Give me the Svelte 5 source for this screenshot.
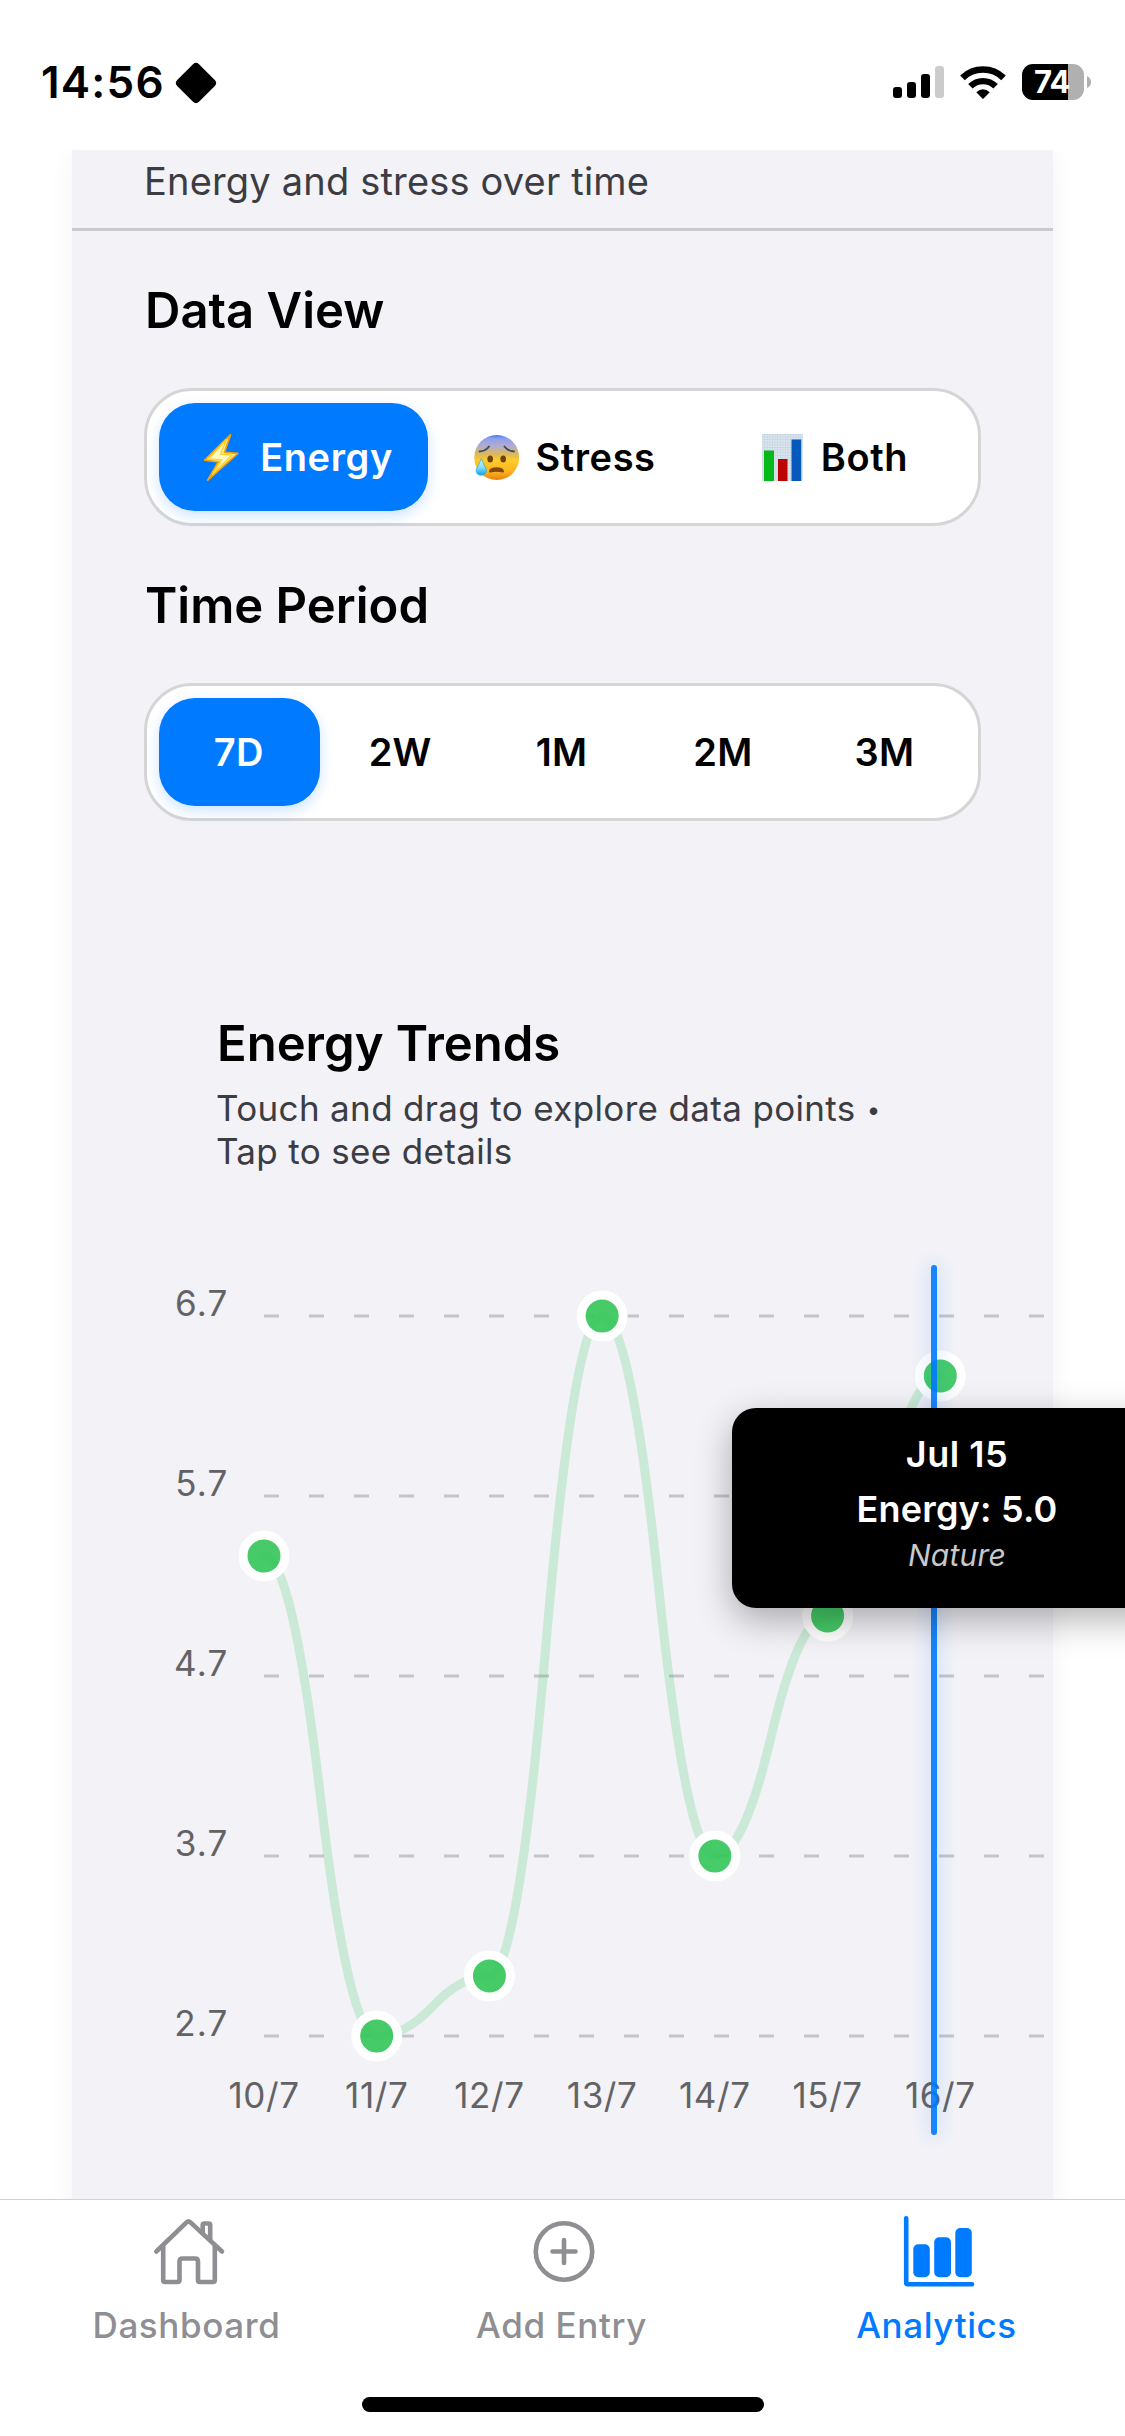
<script>
  const views = [
    { id: 'energy', label: 'Energy' },
    { id: 'stress', label: 'Stress' },
    { id: 'both', label: 'Both' }
  ];
  const periods = ['7D', '2W', '1M', '2M', '3M'];

  let view = $state('energy');
  let period = $state('7D');

  // Chart geometry, local to the plot's own canvas
  const LEFT = 120;
  const TOP = 51;
  const STEP = 112.72;
  const UNIT = 180;
  const MAX = 6.7;

  const ticks = [6.7, 5.7, 4.7, 3.7, 2.7];
  const entries = [
    { day: '10/7', value: 5.3667 },
    { day: '11/7', value: 2.7 },
    { day: '12/7', value: 3.0333 },
    { day: '13/7', value: 6.7 },
    { day: '14/7', value: 3.7 },
    { day: '15/7', value: 5.0333 },
    { day: '16/7', value: 6.3667 }
  ];

  const yOf = (v) => TOP + (MAX - v) * UNIT;
  const points = entries.map((e, i) => ({ ...e, x: LEFT + i * STEP, y: yOf(e.value) }));

  // Each pair of points is joined by two quadratic halves meeting at the midpoint
  const line = points
    .map((p, i) => {
      if (i === 0) return `M${p.x} ${p.y}`;
      const q = points[i - 1];
      const mx = (q.x + p.x) / 2;
      const my = (q.y + p.y) / 2;
      return `Q${(q.x + mx) / 2} ${q.y} ${mx} ${my}Q${(mx + p.x) / 2} ${p.y} ${p.x} ${p.y}`;
    })
    .join(' ');
</script>

<div class="screen">
  <header class="status">
    <div class="clock">
      <span class="time">14:56</span>
      <svg class="diamond" width="42" height="42" viewBox="0 0 42 42">
        <path d="M18 2.2Q21-.6 24 2.2L39.8 18Q42.600 21 39.800 24L24 39.800Q21 42.600 18 39.800L2.200 24Q-.6 21 2.200 18Z" />
      </svg>
    </div>
    <div class="indicators">
      <svg width="51" height="32" viewBox="0 0 51 32">
        <rect x="0" y="21" width="9" height="11" rx="3" />
        <rect x="14" y="16" width="9" height="16" rx="3" />
        <rect x="28" y="8" width="9" height="24" rx="3" />
        <rect x="42" y="0" width="9" height="32" rx="3" fill="#cbcbcb" />
      </svg>
      <svg class="wifi" width="46" height="33" viewBox="0 0 46 33">
        <path d="M2.500 11.800A29.500 29.500 0 0 1 43.500 11.800" fill="none" stroke="#000" stroke-width="6.600" />
        <path d="M10.400 20.300A18 18 0 0 1 35.600 20.300" fill="none" stroke="#000" stroke-width="6.400" />
        <path d="M16.300 26.200Q23 20.200 29.700 26.200L23.600 32.500Q23 33 22.400 32.500Z" />
      </svg>
      <div class="battery"><span>74</span></div>
      <svg class="nub" width="4" height="12" viewBox="0 0 4 12"><path d="M0 0Q4 2 4 6T0 12Z" fill="#b0b0b0" /></svg>
    </div>
  </header>

  <main>
    <section class="card">
      <p class="lead">Energy and stress over time</p>

      <div class="controls">
        <h2>Data View</h2>
        <div class="segments views">
          {#each views as v}
            <button class:active={view === v.id} onclick={() => (view = v.id)}>
              {#if v.id === 'energy'}
                <svg width="47" height="47" viewBox="0 0 47 47">
                  <path d="M32.500.8L6.600 26.200L20.500 27.800L9.700 46.200L39.800 19.400L26.400 18.400Z" fill="#fff3ae" stroke="#f5a10b" stroke-width="1.800" stroke-linejoin="round" />
                  <path d="M28.500 5.500L10.500 25L23.500 26L15 39.500L34 21L22.500 20Z" fill="#fff9c9" stroke="#ffd52e" stroke-width="1.500" />
                </svg>
              {:else if v.id === 'stress'}
                <svg width="47" height="47" viewBox="0 0 47 47">
                  <defs>
                    <linearGradient id="skin" x1="0" y1="0" x2="0" y2="1">
                      <stop offset="0" stop-color="#3f7bf5" />
                      <stop offset=".08" stop-color="#8f9fee" />
                      <stop offset=".24" stop-color="#b2abd0" />
                      <stop offset=".42" stop-color="#d9b75c" />
                      <stop offset=".56" stop-color="#fdcb2b" />
                      <stop offset=".82" stop-color="#fdb31f" />
                      <stop offset="1" stop-color="#e77f0c" />
                    </linearGradient>
                    <linearGradient id="drop" x1="0" y1="0" x2="0" y2="1">
                      <stop offset="0" stop-color="#e2f8ff" />
                      <stop offset=".55" stop-color="#7edcfb" />
                      <stop offset="1" stop-color="#12a0ea" />
                    </linearGradient>
                  </defs>
                  <circle cx="23.700" cy="23.500" r="22.500" fill="url(#skin)" />
                  <path d="M6.500 17.500Q13 17 16 12.500M31.500 12.500Q34.500 17 41 17.500" fill="none" stroke="#3d4a5e" stroke-width="1.800" stroke-linecap="round" />
                  <ellipse cx="17.200" cy="25" rx="2.800" ry="3.600" fill="#70400a" />
                  <ellipse cx="30.200" cy="25" rx="2.800" ry="3.600" fill="#70400a" />
                  <path d="M16 37Q17 33.300 23.500 33.300T31 37Q31.200 39 29.500 38.500Q23.500 37 17.500 38.500Q15.800 39 16 37Z" fill="#80480e" />
                  <path d="M8.300 24.500Q10 29.500 12.500 33.500C15.200 38 11.500 41.200 8 41.200C4.300 41.200 2 38 3.800 34Q6.800 29.500 8.300 24.500Z" fill="url(#drop)" stroke="#23a9ea" stroke-width=".7" />
                </svg>
              {:else}
                <svg width="47" height="47" viewBox="0 0 47 47">
                  <defs>
                    <pattern id="mesh" width="2.600" height="2.600" patternUnits="userSpaceOnUse">
                      <rect width="2.600" height="2.600" fill="#dce6ee" />
                      <path d="M0 0H2.600M0 0V2.600" stroke="#bccedd" stroke-width=".9" />
                    </pattern>
                  </defs>
                  <rect x="3" y="0" width="41" height="47" fill="url(#mesh)" />
                  <rect x="5" y="16.500" width="10" height="30.500" fill="#06b91a" />
                  <rect x="19" y="25" width="9.500" height="22" fill="#bd0404" />
                  <rect x="32.500" y="5.500" width="9.700" height="41.500" fill="#0559bd" />
                </svg>
              {/if}
              <span>{v.label}</span>
            </button>
          {/each}
        </div>

        <h2>Time Period</h2>
        <div class="segments">
          {#each periods as p}
            <button class:active={period === p} onclick={() => (period = p)}><span>{p}</span></button>
          {/each}
        </div>
      </div>

      <div class="intro">
        <h2>Energy Trends</h2>
        <p>Touch and drag to explore data points <span class="bullet">•</span> Tap to see details</p>
      </div>

      <div class="chart">
        <svg width="900" height="870" viewBox="0 0 900 870">
          {#each ticks as t}
            <line class="grid" x1={LEFT} x2="900" y1={yOf(t)} y2={yOf(t)} />
            <text class="axis" x="84.500" y={yOf(t)} text-anchor="end">{t}</text>
          {/each}
          <path class="curve" d={line} />
          {#each points as p}
            <circle class="dot" cx={p.x} cy={p.y} r="21" />
            <text class="axis day" x={p.x} y="843" text-anchor="middle">{p.day}</text>
          {/each}
        </svg>
        <div class="cursor"></div>
        <div class="tooltip">
          <strong class="date">Jul 15</strong>
          <strong class="reading">Energy: 5.0</strong>
          <em>Nature</em>
        </div>
      </div>
    </section>
  </main>

  <nav>
    <div class="tabs">
      <div class="tab">
        <svg width="72" height="72" viewBox="0 0 72 72" fill="none" stroke="currentColor" stroke-width="4.600" stroke-linecap="round" stroke-linejoin="round">
          <path d="M4.300 36.500L34.800 7.200Q36.500 5.600 38.200 7.200L70 36.500" />
          <path d="M11.200 31V65Q11.200 67 13.200 67H25.500Q27.500 67 27.500 65V46.500Q27.500 43.500 30.500 43.500H43Q46 43.500 46 46.500V65Q46 67 48 67H60.800Q62.800 67 62.800 65V31" />
          <path d="M50.700 17.500V10Q50.700 8.500 52.200 8.500H56.700Q58.200 8.500 58.200 10V25" />
        </svg>
        <span>Dashboard</span>
      </div>
      <div class="tab">
        <svg width="72" height="72" viewBox="0 0 72 72" fill="none" stroke="currentColor" stroke-width="4.600" stroke-linecap="round">
          <circle cx="37" cy="36.500" r="28.200" />
          <path d="M25.500 36.500H48.500M37 25V48" />
        </svg>
        <span>Add Entry</span>
      </div>
      <div class="tab current">
        <svg width="72" height="72" viewBox="0 0 72 72" fill="currentColor">
          <path d="M4.200 3.300V67.800Q4.200 69.300 5.700 69.300H70" fill="none" stroke="currentColor" stroke-width="4.600" stroke-linecap="round" />
          <rect x="11.300" y="29.300" width="16.500" height="33" rx="5" />
          <rect x="32.200" y="22.300" width="16.800" height="40" rx="5" />
          <rect x="53.300" y="13" width="16.500" height="49.300" rx="5" />
        </svg>
        <span>Analytics</span>
      </div>
    </div>
    <div class="home"></div>
  </nav>
</div>

<style>
  :global(body) {
    margin: 0;
    background: #fff;
  }

  .screen {
    width: 1125px;
    height: 2436px;
    display: flex;
    flex-direction: column;
    overflow: hidden;
    background: #fff;
    color: #000;
    font-family: Inter, 'Liberation Sans', sans-serif;
  }

  svg {
    display: block;
    flex: none;
    overflow: visible;
  }

  h2,
  p {
    margin: 0;
  }

  .status {
    height: 150px;
    flex: none;
    box-sizing: border-box;
    padding: 62px 34px 0 41px;
    display: flex;
    justify-content: space-between;
    align-items: flex-start;
  }

  .clock {
    display: flex;
    align-items: center;
    gap: 12px;
  }

  .time {
    width: 122px;
    padding-bottom: 2px;
    font-size: 44px;
    font-weight: 600;
    line-height: 40px;
    letter-spacing: 1.2px;
    white-space: nowrap;
  }

  .indicators {
    display: flex;
    align-items: center;
    height: 40px;
  }

  .wifi {
    margin: 0 16px;
  }

  .battery {
    width: 62px;
    height: 36px;
    border-radius: 11px;
    background: linear-gradient(90deg, #000 46px, #b0b0b0 46px);
    color: #fff;
    font-size: 31px;
    font-weight: 700;
    line-height: 36px;
    text-align: center;
    letter-spacing: -0.5px;
  }

  .battery span {
    margin-right: 2px;
  }

  .nub {
    margin-left: 3px;
  }

  main {
    height: 2049px;
    flex: none;
    padding: 0 72px;
    overflow: hidden;
  }

  .card {
    height: 2100px;
    background: #f2f2f7;
    box-shadow: 0 6px 24px rgba(0, 0, 0, 0.05);
  }

  .lead {
    padding: 8px 72px 24px;
    border-bottom: 3px solid #c9c9ce;
    color: #3c3c43;
    font-size: 38px;
    line-height: 46px;
    letter-spacing: 0.18px;
  }

  .controls {
    padding: 0 72px;
  }

  h2 {
    padding-left: 1px;
    font-size: 49px;
    font-weight: 600;
    line-height: 60px;
  }

  .controls h2 {
    padding: 50px 0 47px 1px;
  }

  .segments {
    height: 138px;
    box-sizing: border-box;
    padding: 12px;
    display: flex;
    border: 3px solid #d5d5d6;
    border-radius: 48px;
    background: #fff;
  }

  button {
    flex: 1 1 0;
    min-width: 0;
    padding: 0;
    display: flex;
    align-items: center;
    justify-content: center;
    gap: 15px;
    border: 0;
    border-radius: 36px;
    background: none;
    color: #000;
    font: 600 38px/46px Inter, 'Liberation Sans', sans-serif;
    letter-spacing: 0.6px;
  }

  .segments:not(.views) button {
    padding-right: 2px;
    letter-spacing: 0.2px;
  }

  .views button {
    padding-left: 4px;
  }

  button.active {
    background: #007aff;
    color: #fff;
    box-shadow: 0 5px 14px rgba(0, 122, 255, 0.2);
  }

  .intro {
    padding: 193px 144px 92px;
  }

  .intro p {
    padding-top: 13px;
    color: #3c3c43;
    font-size: 35px;
    line-height: 43px;
    letter-spacing: 0.34px;
  }

  .bullet {
    display: inline-block;
    margin-left: 1px;
    font-size: 24px;
    line-height: 24px;
    vertical-align: 3px;
  }

  .chart {
    position: relative;
    width: 900px;
    margin-left: 72px;
  }

  .grid {
    stroke: #c4c4c9;
    stroke-width: 3;
    stroke-dasharray: 15 30;
  }

  .axis {
    fill: #636366;
    font-size: 35px;
    letter-spacing: 1.2px;
  }

  .day {
    letter-spacing: 0.6px;
  }

  .curve {
    fill: none;
    stroke: #34c759;
    stroke-opacity: 0.2;
    stroke-width: 9;
    stroke-linecap: round;
  }

  .dot {
    fill: #34c759;
    fill-opacity: 0.9;
    stroke: #fff;
    stroke-width: 9;
  }

  .cursor {
    position: absolute;
    top: 0;
    left: 787px;
    width: 6px;
    height: 870px;
    border-radius: 3px;
    background: #007aff;
    opacity: 0.9;
    box-shadow: 0 0 18px rgba(0, 122, 255, 0.3);
  }

  .tooltip {
    position: absolute;
    top: 143px;
    left: 588px;
    width: 450px;
    height: 200px;
    box-sizing: border-box;
    padding-top: 24px;
    display: flex;
    flex-direction: column;
    align-items: center;
    border-radius: 24px;
    background: #000;
    color: #fff;
    box-shadow: 0 12px 36px rgba(0, 0, 0, 0.3);
  }

  .tooltip strong {
    font-size: 36px;
    font-weight: 600;
    line-height: 44px;
    letter-spacing: 0.5px;
  }

  .tooltip .reading {
    margin-top: 11px;
    letter-spacing: 0.2px;
  }

  .tooltip em {
    margin-top: 6px;
    color: #c9c9c9;
    font-size: 30px;
    line-height: 36px;
    letter-spacing: 0.2px;
  }

  nav {
    flex: 1;
    display: flex;
    flex-direction: column;
    align-items: center;
    border-top: 1px solid #d1d1d5;
    background: #fff;
  }

  .tabs {
    width: 100%;
    display: flex;
    padding-top: 15px;
  }

  .tab {
    flex: 1 1 0;
    display: flex;
    flex-direction: column;
    align-items: center;
    gap: 17px;
    color: #8e8e93;
    font-size: 35px;
    font-weight: 500;
    line-height: 43px;
    letter-spacing: 0.6px;
  }

  .tab span {
    padding-right: 2px;
  }

  .tab.current {
    color: #007aff;
  }

  .home {
    width: 402px;
    height: 15px;
    margin-top: 50px;
    border-radius: 8px;
    background: #000;
  }
</style>
